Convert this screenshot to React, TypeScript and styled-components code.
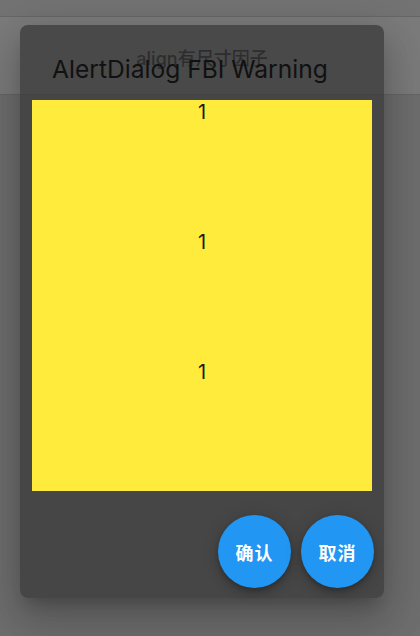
import styled, { createGlobalStyle } from 'styled-components';

const GlobalStyle = createGlobalStyle`
    html, body {
        margin: 0;
        padding: 0;
        background: #707070;
    }
    * {
        box-sizing: border-box;
    }
`;

const Page = styled.div`
    position: relative;
    width: 420px;
    height: 636px;
    overflow: hidden;
    display: flex;
    flex-direction: column;
    background: #707070;
    font-family: Inter, "Noto Sans CJK SC", sans-serif;
`;

const StatusBar = styled.div`
    height: 17px;
    background: #737373;
    border-bottom: 1px solid #676767;
`;

const AppBar = styled.header`
    height: 78px;
    background: #7b7b7b;
    border-bottom: 1px solid #666666;
    display: flex;
    justify-content: center;
    padding: 31px 16px 0 0;
`;

const AppTitle = styled.h1`
    margin: 0;
    font-size: 18px;
    line-height: 22px;
    font-weight: 500;
    color: #000;
`;

const Body = styled.main`
    flex: 1;
    background: #6e6e6e;
`;

/* dialog sits above the page */
const Overlay = styled.div`
    position: absolute;
    inset: 0;
    display: flex;
    justify-content: center;
    align-items: flex-start;
    padding: 25px 16px 0 0;
`;

const Dialog = styled.section`
    width: 364px;
    display: flex;
    flex-direction: column;
    padding: 30px 10px 10px 12px;
    border-radius: 8px;
    background: rgba(58, 58, 58, 0.77);
    box-shadow: 0 11px 15px -7px rgba(0, 0, 0, 0.2),
        0 24px 38px 3px rgba(0, 0, 0, 0.14),
        0 9px 46px 8px rgba(0, 0, 0, 0.12);
`;

const DialogTitle = styled.h2`
    margin: 0 0 16px 20px;
    font-size: 24.6px;
    line-height: 29px;
    font-weight: 400;
    color: #111;
`;

const YellowBox = styled.div`
    width: 340px;
    height: 391px;
    background: #ffeb3b;
    display: flex;
    flex-direction: column;
`;

const Row = styled.div`
    height: 130px;
    text-align: center;
    font-size: 20px;
    line-height: 24px;
    color: #1a1a1a;
`;

const Actions = styled.div`
    display: flex;
    justify-content: flex-end;
    gap: 10px;
    margin-top: 24px;
`;

const RoundButton = styled.button`
    width: 73px;
    height: 73px;
    border: none;
    border-radius: 50%;
    background: #2196f3;
    color: #fff;
    font-family: "Noto Sans CJK SC", sans-serif;
    font-size: 18px;
    font-weight: 700;
    letter-spacing: 1px;
    padding: 0;
    box-shadow: 0 3px 5px -1px rgba(0, 0, 0, 0.2),
        0 6px 10px 0 rgba(0, 0, 0, 0.14),
        0 1px 18px 0 rgba(0, 0, 0, 0.12);
    cursor: pointer;
`;

export default function App() {
    return (
        <>
            <GlobalStyle />
            <Page>
                <StatusBar />
                <AppBar>
                    <AppTitle>align有尺寸因子</AppTitle>
                </AppBar>
                <Body />

                <Overlay>
                    <Dialog>
                        <DialogTitle>AlertDialog FBI Warning</DialogTitle>
                        <YellowBox>
                            <Row>1</Row>
                            <Row>1</Row>
                            <Row>1</Row>
                        </YellowBox>
                        <Actions>
                            <RoundButton>确认</RoundButton>
                            <RoundButton>取消</RoundButton>
                        </Actions>
                    </Dialog>
                </Overlay>
            </Page>
        </>
    );
}
